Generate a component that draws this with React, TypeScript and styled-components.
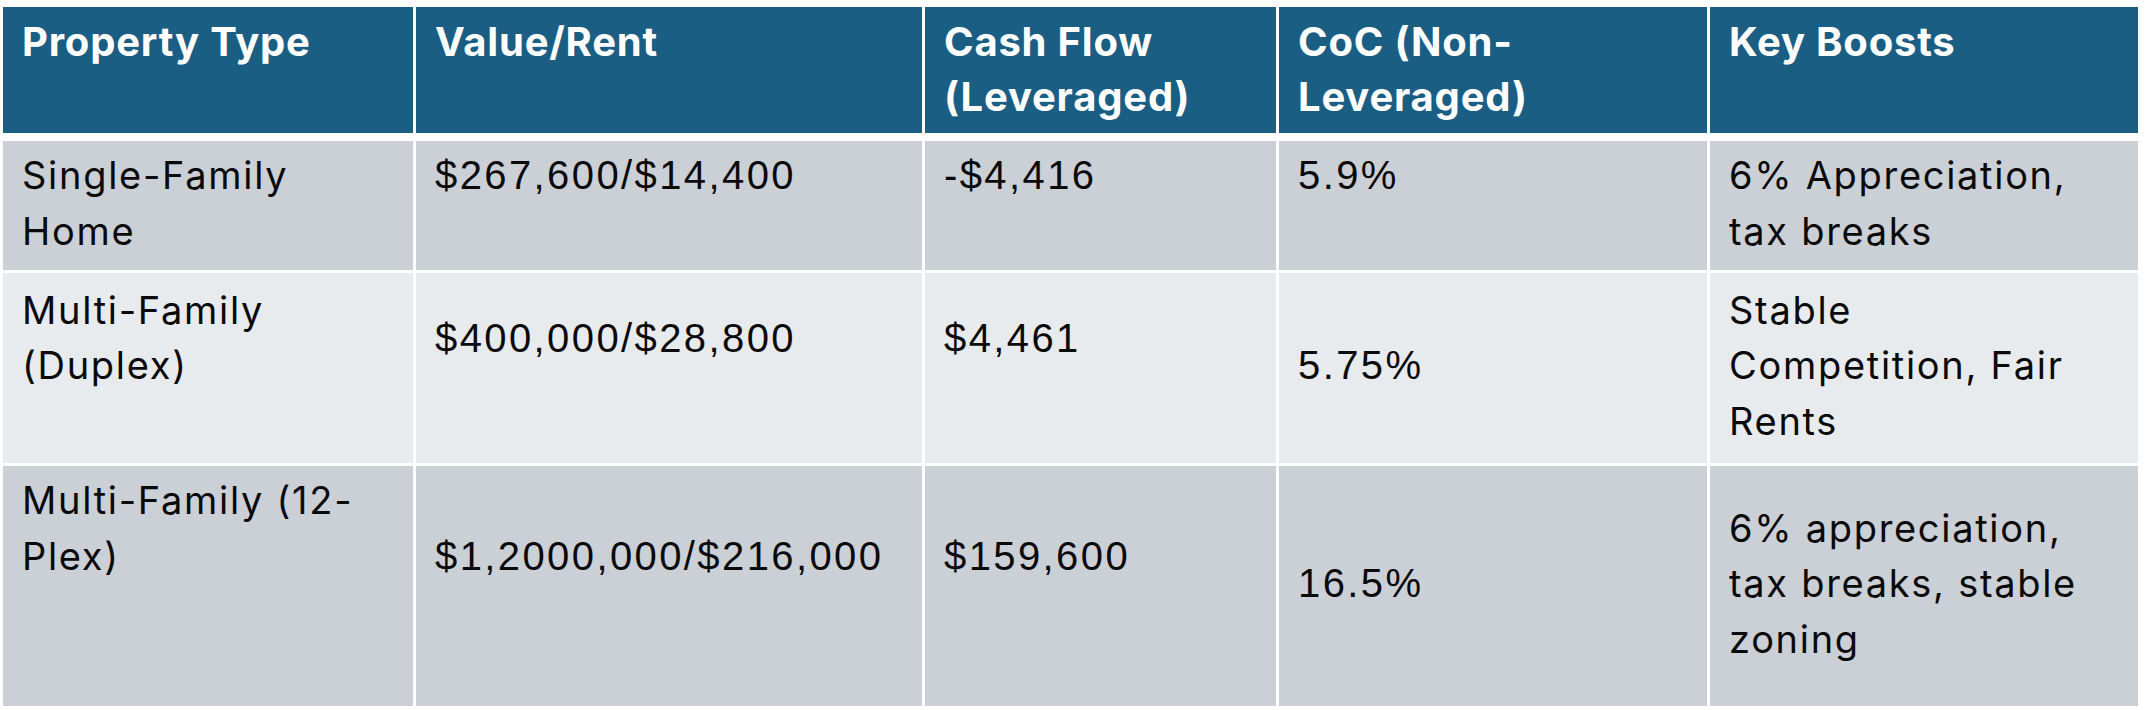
import React from 'react';
import styled, { createGlobalStyle } from 'styled-components';

const Global = createGlobalStyle`
  html, body { margin: 0; padding: 0; background: #ffffff; }
  body { width: 2145px; height: 710px; overflow: hidden; }
`;

const COLS = '410px 506px 351px 428px 428px';
const LH = 55.5;

const Page = styled.div`
  padding: 7px 0 0 3px;
`;

const Table = styled.div`
  display: flex;
  flex-direction: column;
  gap: 3px;
  width: 2135px;
`;

const HeaderRow = styled.div`
  display: grid;
  grid-template-columns: ${COLS};
  column-gap: 3px;
  height: 126px;
  margin-bottom: 5px;
`;

const BodyRow = styled.div<{ $h: number }>`
  display: grid;
  grid-template-columns: ${COLS};
  column-gap: 3px;
  height: ${(p) => p.$h}px;
`;

const HeadCell = styled.div`
  background: #1b5e83;
  color: #ffffff;
  font-family: Inter, 'Noto Sans', sans-serif;
  font-weight: 700;
  font-size: 40px;
  letter-spacing: 0.8px;
  line-height: 55px;
  padding: 7px 18px 0 19px;
  white-space: nowrap;
`;

const Cell = styled.div<{ $tone: 'dark' | 'light' }>`
  background: ${(p) => (p.$tone === 'dark' ? '#cbd0d7' : '#e8ebee')};
  display: flex;
  flex-direction: column;
  justify-content: center;
  padding: 0 18px 4px 19px;
  color: #0a0a0a;
`;

const Text = styled.div<{ $lines: number; $kind: 'text' | 'num' }>`
  min-height: ${(p) => p.$lines * LH}px;
  line-height: ${LH}px;
  white-space: nowrap;
  font-family: ${(p) =>
    p.$kind === 'num' ? "'Liberation Sans', Arial, sans-serif" : "Inter, 'Noto Sans', sans-serif"};
  font-size: ${(p) => (p.$kind === 'num' ? '40px' : '38px')};
  letter-spacing: ${(p) => (p.$kind === 'num' ? '2.4px' : '1.7px')};
`;

type CellData = { lines: string[]; min: number; kind: 'text' | 'num' };
type RowData = { h: number; tone: 'dark' | 'light'; cells: CellData[] };

const headers: string[][] = [
  ['Property Type'],
  ['Value/Rent'],
  ['Cash Flow', '(Leveraged)'],
  ['CoC (Non-', 'Leveraged)'],
  ['Key Boosts'],
];

const rows: RowData[] = [
  {
    h: 129,
    tone: 'dark',
    cells: [
      { lines: ['Single-Family', 'Home'], min: 2, kind: 'text' },
      { lines: ['$267,600/$14,400'], min: 2, kind: 'num' },
      { lines: ['-$4,416'], min: 2, kind: 'num' },
      { lines: ['5.9%'], min: 2, kind: 'num' },
      { lines: ['6% Appreciation,', 'tax breaks'], min: 2, kind: 'text' },
    ],
  },
  {
    h: 190,
    tone: 'light',
    cells: [
      { lines: ['Multi-Family', '(Duplex)'], min: 3, kind: 'text' },
      { lines: ['$400,000/$28,800'], min: 2, kind: 'num' },
      { lines: ['$4,461'], min: 2, kind: 'num' },
      { lines: ['5.75%'], min: 1, kind: 'num' },
      { lines: ['Stable', 'Competition, Fair', 'Rents'], min: 3, kind: 'text' },
    ],
  },
  {
    h: 240,
    tone: 'dark',
    cells: [
      { lines: ['Multi-Family (12-', 'Plex)'], min: 4, kind: 'text' },
      { lines: ['$1,2000,000/$216,000'], min: 2, kind: 'num' },
      { lines: ['$159,600'], min: 2, kind: 'num' },
      { lines: ['16.5%'], min: 1, kind: 'num' },
      { lines: ['6% appreciation,', 'tax breaks, stable', 'zoning'], min: 3, kind: 'text' },
    ],
  },
];

function Lines({ lines }: { lines: string[] }) {
  return (
    <>
      {lines.map((l, i) => (
        <React.Fragment key={i}>
          {i > 0 && <br />}
          {l}
        </React.Fragment>
      ))}
    </>
  );
}

export default function App() {
  return (
    <>
      <Global />
      <Page>
        <Table>
          <HeaderRow>
            {headers.map((h, i) => (
              <HeadCell key={i}>
                <Lines lines={h} />
              </HeadCell>
            ))}
          </HeaderRow>
          {rows.map((r, ri) => (
            <BodyRow key={ri} $h={r.h}>
              {r.cells.map((c, ci) => (
                <Cell key={ci} $tone={r.tone}>
                  <Text $lines={c.min} $kind={c.kind}>
                    <Lines lines={c.lines} />
                  </Text>
                </Cell>
              ))}
            </BodyRow>
          ))}
        </Table>
      </Page>
    </>
  );
}
